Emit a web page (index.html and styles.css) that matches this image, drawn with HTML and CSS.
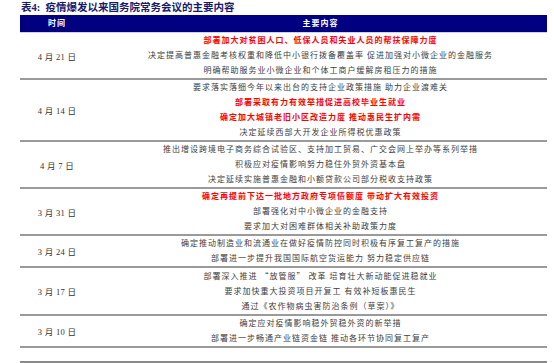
FILE: index.html
```html
<!DOCTYPE html>
<html lang="zh">
<head>
<meta charset="utf-8">
<link rel="stylesheet" href="styles.css">
</head>
<body>
<div class="page">
  <div class="title">表4:&nbsp;&nbsp;疫情爆发以来国务院常务会议的主要内容</div>
  <div class="head">
    <div class="hcell time">时间</div>
    <div class="hcell main">主要内容</div>
  </div>
  <div class="row">
    <div class="date">4 月 21 日</div>
    <div class="content">
      <div class="red">部署加大对贫困人口、低保人员和失业人员的帮扶保障力度</div>
      <div>决定提高普惠金融考核权重和降低中小银行拨备覆盖率 促进加强对小微企业的金融服务</div>
      <div>明确帮助服务业小微企业和个体工商户缓解房租压力的措施</div>
    </div>
  </div>
  <div class="row">
    <div class="date">4 月 14 日</div>
    <div class="content">
      <div>要求落实落细今年以来出台的支持企业政策措施 助力企业渡难关</div>
      <div class="red">部署采取有力有效举措促进高校毕业生就业</div>
      <div class="red">确定加大城镇老旧小区改造力度 推动惠民生扩内需</div>
      <div>决定延续西部大开发企业所得税优惠政策</div>
    </div>
  </div>
  <div class="row">
    <div class="date">4 月 7 日</div>
    <div class="content">
      <div>推出增设跨境电子商务综合试验区、支持加工贸易、广交会网上举办等系列举措</div>
      <div>积极应对疫情影响努力稳住外贸外资基本盘</div>
      <div>决定延续实施普惠金融和小额贷款公司部分税收支持政策</div>
    </div>
  </div>
  <div class="row">
    <div class="date">3 月 31 日</div>
    <div class="content">
      <div class="red">确定再提前下达一批地方政府专项债额度 带动扩大有效投资</div>
      <div>部署强化对中小微企业的金融支持</div>
      <div>要求加大对困难群体相关补助政策力度</div>
    </div>
  </div>
  <div class="row">
    <div class="date">3 月 24 日</div>
    <div class="content">
      <div>确定推动制造业和流通业在做好疫情防控同时积极有序复工复产的措施</div>
      <div>部署进一步提升我国国际航空货运能力 努力稳定供应链</div>
    </div>
  </div>
  <div class="row">
    <div class="date">3 月 17 日</div>
    <div class="content">
      <div>部署深入推进 <span class="cjk">“放管服”</span> 改革 培育壮大新动能促进稳就业</div>
      <div>要求加快重大投资项目开复工 有效补短板惠民生</div>
      <div>通过《农作物病虫害防治条例（草案）》</div>
    </div>
  </div>
  <div class="row">
    <div class="date">3 月 10 日</div>
    <div class="content">
      <div>确定应对疫情影响稳外贸稳外资的新举措</div>
      <div>部署进一步畅通产业链资金链 推动各环节协同复工复产</div>
    </div>
  </div>
  <div class="bottom"></div>
</div>
</body>
</html>
```

FILE: styles.css
```css
html, body {
  margin: 0;
  padding: 0;
  background: #ffffff;
}
.page {
  margin-left: 20px;
  width: 527px;
  font-family: "Liberation Serif", "Noto Sans CJK SC", serif;
}
.title {
  height: 15px;
  line-height: 15px;
  padding-left: 1px;
  font-size: 10.5px;
  font-weight: bold;
  color: #1a1a6b;
  white-space: nowrap;
}
.head {
  display: grid;
  grid-template-columns: 74px 1fr;
  height: 17px;
  background: #000080;
  border-bottom: 1px solid #d0d0e0;
}
.hcell {
  color: #ffffff;
  font-size: 8px;
  font-weight: bold;
  line-height: 17px;
  text-align: center;
  letter-spacing: 1px;
}
.row {
  display: grid;
  grid-template-columns: 74px 1fr;
  border-bottom: 2px solid #9a9a9a;
}
.date {
  display: flex;
  align-items: center;
  justify-content: center;
  font-size: 8.5px;
  color: #333333;
  letter-spacing: 0.3px;
}
.content {
  display: flex;
  flex-direction: column;
  align-items: center;
  font-size: 8px;
  line-height: 15px;
  letter-spacing: 1px;
  color: #3d3d3d;
  white-space: nowrap;
}
.content .red {
  color: #ff0000;
  font-weight: bold;
}
.cjk {
  font-family: "Noto Sans CJK SC", sans-serif;
}
.bottom {
  margin-top: 13px;
  border-top: 2px solid #8a8a8a;
}
```
